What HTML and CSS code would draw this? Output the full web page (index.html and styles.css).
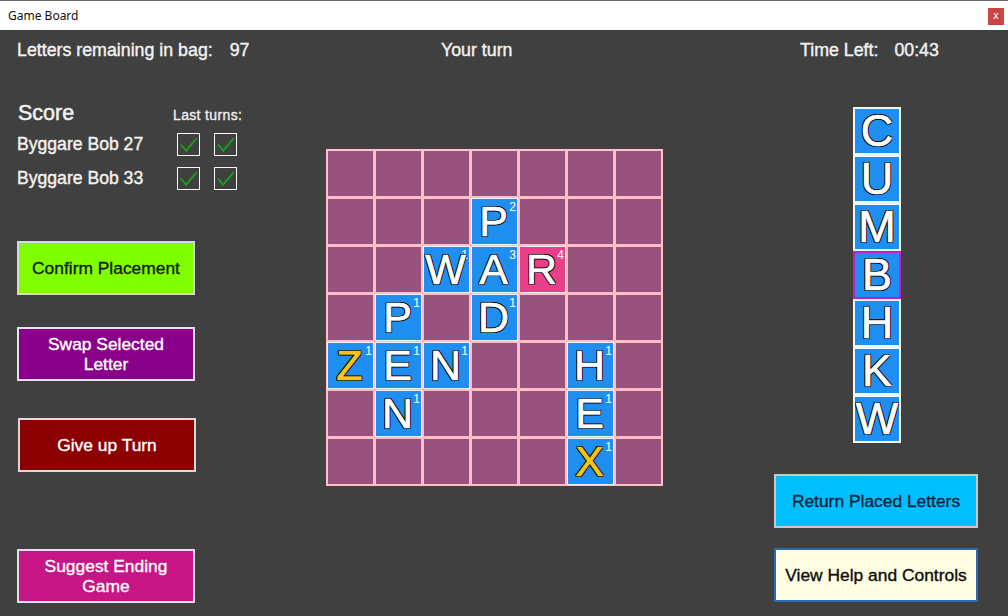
FILE: index.html
```html
<!DOCTYPE html>
<html>
<head>
<meta charset="utf-8">
<title>Game Board</title>
<link rel="stylesheet" href="styles.css">
</head>
<body>
<div class="titlebar">
  <span class="title">Game Board</span>
  <span class="close">x</span>
</div>
<div class="app">
  <header class="topbar">
    <div class="bag">Letters remaining in bag:<span class="val">97</span></div>
    <div class="turn">Your turn</div>
    <div class="timer">Time Left:<span class="val">00:43</span></div>
  </header>
  <div class="content">
    <aside class="left">
      <div class="score-head">
        <span class="score-title">Score</span>
        <span class="last-turns">Last turns:</span>
      </div>
      <div class="score-row">
        <span class="player">Byggare Bob 27</span>
        <span class="check"><svg viewBox="0 0 22 22"><polyline points="3,11 8.5,17.5 19.5,4.5"/></svg></span>
        <span class="check"><svg viewBox="0 0 22 22"><polyline points="3,11 8.5,17.5 19.5,4.5"/></svg></span>
      </div>
      <div class="score-row">
        <span class="player">Byggare Bob 33</span>
        <span class="check"><svg viewBox="0 0 22 22"><polyline points="3,11 8.5,17.5 19.5,4.5"/></svg></span>
        <span class="check"><svg viewBox="0 0 22 22"><polyline points="3,11 8.5,17.5 19.5,4.5"/></svg></span>
      </div>
      <button class="btn btn-confirm">Confirm Placement</button>
      <button class="btn btn-swap">Swap Selected<br>Letter</button>
      <button class="btn btn-giveup">Give up Turn</button>
      <button class="btn btn-suggest">Suggest Ending<br>Game</button>
    </aside>

    <div class="board">
      <!-- row 0 -->
      <div class="cell"></div><div class="cell"></div><div class="cell"></div><div class="cell"></div><div class="cell"></div><div class="cell"></div><div class="cell"></div>
      <!-- row 1 -->
      <div class="cell"></div><div class="cell"></div><div class="cell"></div>
      <div class="cell tile"><span class="pts">2</span><span class="ltr">P</span></div>
      <div class="cell"></div><div class="cell"></div><div class="cell"></div>
      <!-- row 2 -->
      <div class="cell"></div><div class="cell"></div>
      <div class="cell tile"><span class="pts">1</span><span class="ltr">W</span></div>
      <div class="cell tile"><span class="pts">3</span><span class="ltr">A</span></div>
      <div class="cell tile new"><span class="pts">4</span><span class="ltr">R</span></div>
      <div class="cell"></div><div class="cell"></div>
      <!-- row 3 -->
      <div class="cell"></div>
      <div class="cell tile"><span class="pts">1</span><span class="ltr">P</span></div>
      <div class="cell"></div>
      <div class="cell tile"><span class="pts">1</span><span class="ltr">D</span></div>
      <div class="cell"></div><div class="cell"></div><div class="cell"></div>
      <!-- row 4 -->
      <div class="cell tile"><span class="pts">1</span><span class="ltr gold">Z</span></div>
      <div class="cell tile"><span class="pts">1</span><span class="ltr">E</span></div>
      <div class="cell tile"><span class="pts">1</span><span class="ltr">N</span></div>
      <div class="cell"></div><div class="cell"></div>
      <div class="cell tile"><span class="pts">1</span><span class="ltr">H</span></div>
      <div class="cell"></div>
      <!-- row 5 -->
      <div class="cell"></div>
      <div class="cell tile"><span class="pts">1</span><span class="ltr">N</span></div>
      <div class="cell"></div><div class="cell"></div><div class="cell"></div>
      <div class="cell tile"><span class="pts">1</span><span class="ltr">E</span></div>
      <div class="cell"></div>
      <!-- row 6 -->
      <div class="cell"></div><div class="cell"></div><div class="cell"></div><div class="cell"></div><div class="cell"></div>
      <div class="cell tile"><span class="pts">1</span><span class="ltr gold">X</span></div>
      <div class="cell"></div>
    </div>

    <aside class="right">
      <div class="rack">
        <div class="rack-tile">C</div>
        <div class="rack-tile">U</div>
        <div class="rack-tile">M</div>
        <div class="rack-tile selected">B</div>
        <div class="rack-tile">H</div>
        <div class="rack-tile">K</div>
        <div class="rack-tile">W</div>
      </div>
      <button class="btn btn-return">Return Placed Letters</button>
      <button class="btn btn-help">View Help and Controls</button>
    </aside>
  </div>
</div>
</body>
</html>
```

FILE: styles.css
```css
* { box-sizing: border-box; }

html, body {
  margin: 0;
  padding: 0;
}

body {
  width: 1008px;
  height: 616px;
  overflow: hidden;
  background: #404040;
  font-family: "Liberation Sans", Arial, sans-serif;
  color: #f2f2f2;
}

.titlebar {
  height: 30px;
  background: #ffffff;
  display: flex;
  align-items: center;
  justify-content: space-between;
  padding: 0 4px 0 8px;
  border-top: 1px solid #6a6a6a;
}

.title {
  font-family: "Noto Sans", "Open Sans", sans-serif;
  font-size: 12px;
  color: #111;
}

.close {
  width: 16px;
  height: 17px;
  margin-top: 2px;
  background: #c94444;
  color: #fff;
  font-family: "DejaVu Sans", sans-serif;
  font-size: 10px;
  line-height: 16px;
  text-align: center;
}

.app {
  height: 586px;
}

.topbar {
  height: 40px;
  display: grid;
  grid-template-columns: 424px 359px auto;
  align-items: center;
  padding-left: 17px;
  font-size: 17.8px;
  white-space: pre;
  -webkit-text-stroke: 0.4px currentColor;
}

.topbar .val {
  margin-left: 17px;
}

.timer .val {
  margin-left: 16px;
}

.content {
  display: grid;
  grid-template-columns: 309px 337px 1fr;
  padding-left: 17px;
  align-items: start;
}

/* ---------- left column ---------- */
.left {
  display: flex;
  flex-direction: column;
  align-items: flex-start;
  padding-top: 30px;
}

.score-head {
  height: 27px;
  width: 240px;
  display: flex;
  align-items: center;
}

.score-title {
  font-size: 21.5px;
  width: 156px;
  padding-left: 1px;
  -webkit-text-stroke: 0.5px currentColor;
}

.last-turns {
  font-size: 14px;
  letter-spacing: 0.35px;
  margin-top: 3px;
  -webkit-text-stroke: 0.3px currentColor;
}

.score-row {
  height: 34px;
  display: flex;
  align-items: center;
}

.player {
  width: 160px;
  font-size: 17.6px;
  white-space: nowrap;
  -webkit-text-stroke: 0.4px currentColor;
}

.check {
  width: 23px;
  height: 23px;
  border: 1.5px solid #f8f8f8;
  margin-right: 14px;
  display: block;
}

.check svg {
  width: 100%;
  height: 100%;
  display: block;
}

.check polyline {
  fill: none;
  stroke: #17a017;
  stroke-width: 2;
}

.btn {
  width: 178px;
  height: 54px;
  border: 2px solid #dcdcdc;
  font-family: "Liberation Sans", Arial, sans-serif;
  font-size: 17.4px;
  line-height: 20px;
  text-align: center;
  padding: 0;
  color: #ffffff;
  -webkit-text-stroke: 0.35px currentColor;
}

.btn-confirm {
  margin-top: 46px;
  background: #80ff00;
  color: #111a11;
  border-color: #d8d8d8;
}

.btn-swap {
  margin-top: 32px;
  background: #8b008b;
  border-color: #e8e0ea;
}

.btn-giveup {
  margin-top: 37px;
  margin-left: 1px;
  background: #8b0000;
  border-color: #e0d8d8;
}

.btn-suggest {
  margin-top: 77px;
  background: #c71585;
  border-color: #eadcea;
}

/* ---------- board ---------- */
.board {
  margin-top: 79px;
  width: 337px;
  height: 337px;
  background: #ffc0c8;
  padding: 2px;
  display: grid;
  grid-template-columns: repeat(7, 45px);
  grid-template-rows: repeat(7, 45px);
  gap: 3px;
}

.cell {
  background: #97537b;
  position: relative;
}

.cell.tile {
  background: #1e8ef0;
  border: 1px solid #eef3f8;
  margin: -1px;
  width: 47px;
  height: 47px;
}

.cell.tile.new {
  background: #e9408a;
}

.ltr,
.rack-tile {
  color: #ffffff;
  -webkit-text-stroke: 0.7px currentColor;
  text-shadow:
    1px 0 0 #000, -1px 0 0 #000, 0 1px 0 #000, 0 -1px 0 #000,
    1px 1px 0 #000, -1px -1px 0 #000, 1px -1px 0 #000, -1px 1px 0 #000;
}

.ltr {
  position: relative;
  display: block;
  height: 100%;
  font-size: 43px;
  line-height: 45px;
  text-align: center;
  padding-right: 2px;
}

.ltr.gold {
  color: #f4c518;
}

.pts {
  position: absolute;
  top: 2px;
  right: 1px;
  font-size: 12px;
  line-height: 13px;
  color: #ffffff;
}

/* ---------- right column ---------- */
.right {
  display: flex;
  flex-direction: column;
  align-items: flex-start;
}

.rack {
  margin-top: 37px;
  margin-left: 190px;
  display: flex;
  flex-direction: column;
}

.rack-tile {
  width: 48px;
  height: 48px;
  background: #1e8ef0;
  border: 2px solid #f4f6ea;
  font-size: 45px;
  line-height: 44px;
  text-align: center;
}

.rack-tile.selected {
  border-color: #c21ec2;
}

.btn-return {
  margin-top: 31px;
  margin-left: 111px;
  width: 204px;
  background: #00bfff;
  color: #0d1f3a;
  border-color: #c8c8c8;
}

.btn-help {
  margin-top: 20px;
  margin-left: 111px;
  width: 204px;
  background: #fffde2;
  color: #0c0c0c;
  border: 2px solid #2b6cae;
}
```
